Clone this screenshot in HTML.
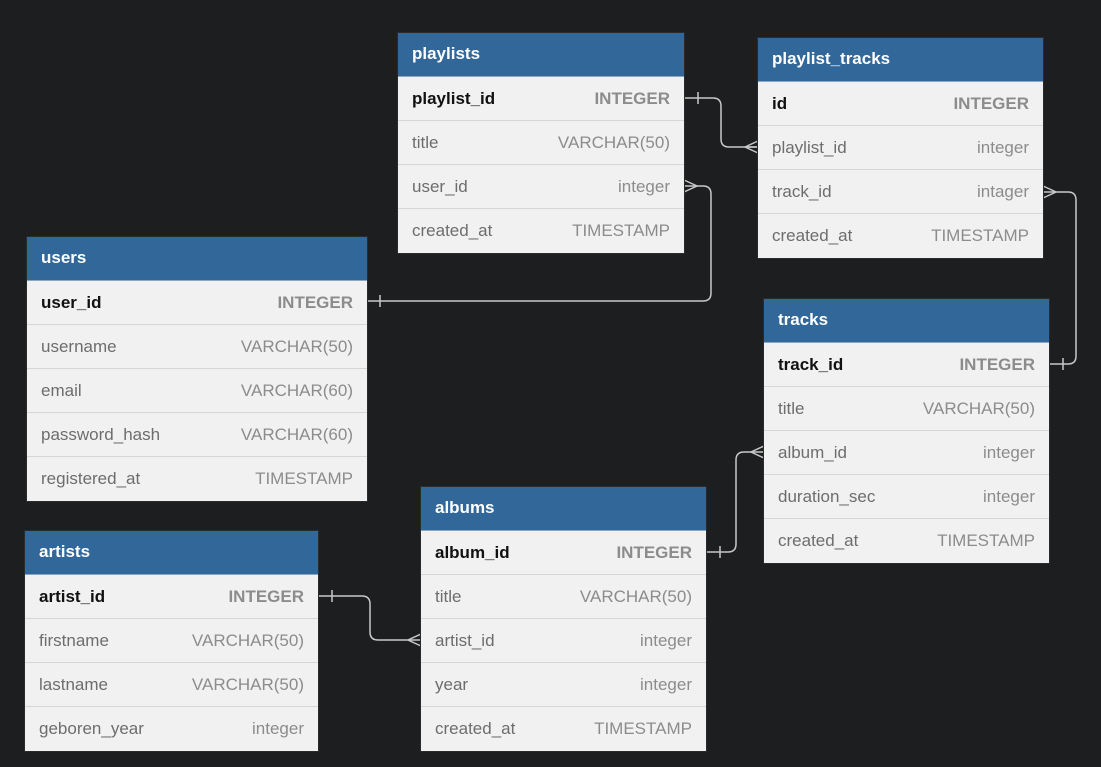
<!DOCTYPE html>
<html><head><meta charset="utf-8"><style>
body{margin:0;width:1101px;height:767px;background:#1d1e20;font-family:"Liberation Sans","DejaVu Sans",sans-serif;position:relative;overflow:hidden}
.t{position:absolute;background:#f1f1f1;box-shadow:0 0 0 1px #2a2b2d}
.h{height:44px;background:#32679a;color:#fff;font-weight:bold;font-size:17px;line-height:42px;padding-left:14px;border-bottom:1px solid #8aa6c2;box-sizing:border-box}
.r{height:44px;border-bottom:1px solid #d6d6d6;box-sizing:border-box;display:flex;justify-content:space-between;align-items:center;padding:0 14px;font-size:17px;color:#6d6d6d}
.r:last-child{border-bottom:none}
.r span:last-child{color:#8c8c8c}
.pk span:first-child{color:#111;font-weight:bold}
.pk span:last-child{font-weight:bold;color:#8c8c8c}
svg{position:absolute;left:0;top:0}
</style></head><body>
<svg width="1101" height="767" fill="none" stroke="#c8c8c8" stroke-width="1.5">
<path d="M684 98H713Q721 98 721 106V139Q721 147 729 147H758"/><path d="M698 92V104"/><path d="M758 141L745 147L758 153M745 147H758"/>
<path d="M684 186H703Q711 186 711 194V293Q711 301 703 301H367"/><path d="M380 295V307"/><path d="M684 180L697 186L684 192"/>
<path d="M1043 192H1068Q1076 192 1076 200V356Q1076 364 1068 364H1049"/><path d="M1063 358V370"/><path d="M1043 186L1056 192L1043 198"/>
<path d="M764 452H744Q736 452 736 460V544Q736 552 728 552H706"/><path d="M720 546V558"/><path d="M764 446L751 452L764 458"/>
<path d="M318 596H362Q370 596 370 604V632Q370 640 378 640H421"/><path d="M332 590V602"/><path d="M421 634L408 640L421 646"/>
</svg>
<div class="t" style="left:398px;top:33px;width:286px"><div class="h">playlists</div>
<div class="r pk"><span>playlist_id</span><span>INTEGER</span></div>
<div class="r"><span>title</span><span>VARCHAR(50)</span></div>
<div class="r"><span>user_id</span><span>integer</span></div>
<div class="r"><span>created_at</span><span>TIMESTAMP</span></div></div>
<div class="t" style="left:758px;top:38px;width:285px"><div class="h">playlist_tracks</div>
<div class="r pk"><span>id</span><span>INTEGER</span></div>
<div class="r"><span>playlist_id</span><span>integer</span></div>
<div class="r"><span>track_id</span><span>intager</span></div>
<div class="r"><span>created_at</span><span>TIMESTAMP</span></div></div>
<div class="t" style="left:27px;top:237px;width:340px"><div class="h">users</div>
<div class="r pk"><span>user_id</span><span>INTEGER</span></div>
<div class="r"><span>username</span><span>VARCHAR(50)</span></div>
<div class="r"><span>email</span><span>VARCHAR(60)</span></div>
<div class="r"><span>password_hash</span><span>VARCHAR(60)</span></div>
<div class="r"><span>registered_at</span><span>TIMESTAMP</span></div></div>
<div class="t" style="left:764px;top:299px;width:285px"><div class="h">tracks</div>
<div class="r pk"><span>track_id</span><span>INTEGER</span></div>
<div class="r"><span>title</span><span>VARCHAR(50)</span></div>
<div class="r"><span>album_id</span><span>integer</span></div>
<div class="r"><span>duration_sec</span><span>integer</span></div>
<div class="r"><span>created_at</span><span>TIMESTAMP</span></div></div>
<div class="t" style="left:421px;top:487px;width:285px"><div class="h">albums</div>
<div class="r pk"><span>album_id</span><span>INTEGER</span></div>
<div class="r"><span>title</span><span>VARCHAR(50)</span></div>
<div class="r"><span>artist_id</span><span>integer</span></div>
<div class="r"><span>year</span><span>integer</span></div>
<div class="r"><span>created_at</span><span>TIMESTAMP</span></div></div>
<div class="t" style="left:25px;top:531px;width:293px"><div class="h">artists</div>
<div class="r pk"><span>artist_id</span><span>INTEGER</span></div>
<div class="r"><span>firstname</span><span>VARCHAR(50)</span></div>
<div class="r"><span>lastname</span><span>VARCHAR(50)</span></div>
<div class="r"><span>geboren_year</span><span>integer</span></div></div>
</body></html>
